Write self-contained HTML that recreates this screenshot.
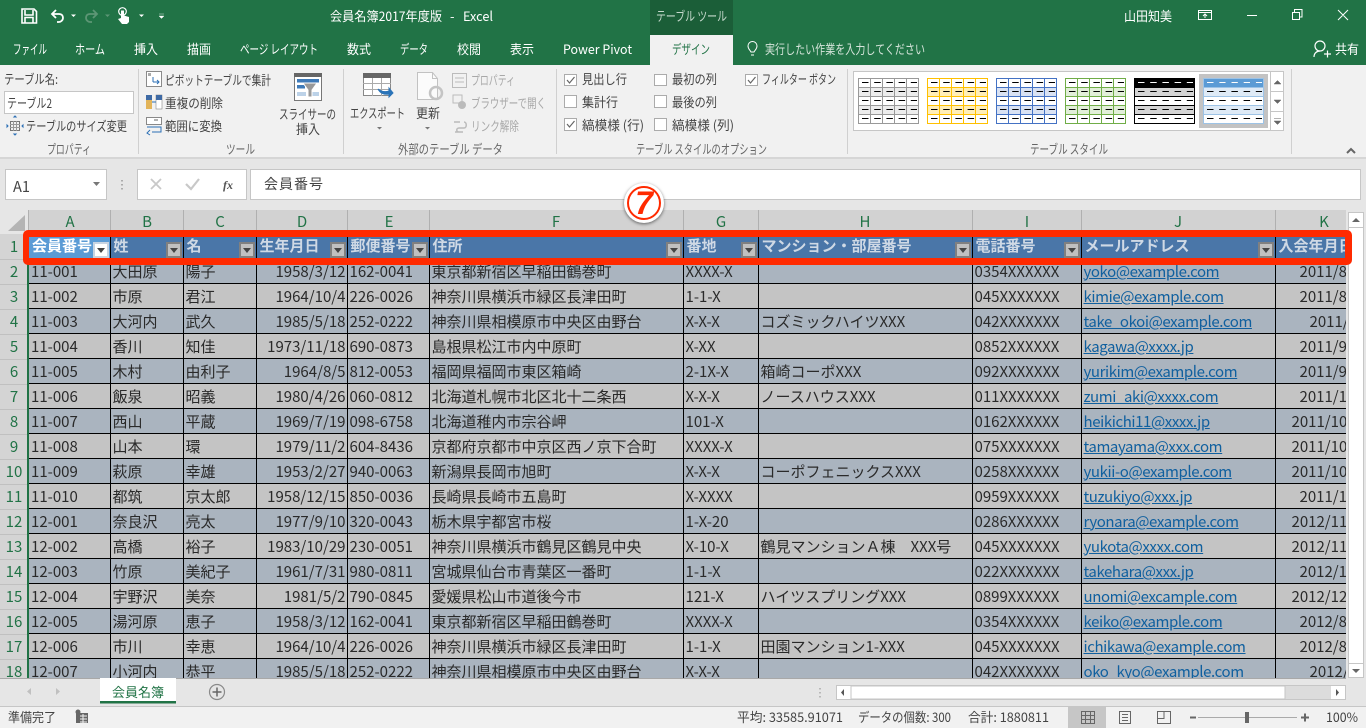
<!DOCTYPE html>
<html lang="ja"><head><meta charset="utf-8"><title>会員名簿2017年度版 - Excel</title>
<style>
html,body{margin:0;padding:0;width:1366px;height:728px;overflow:hidden;background:#e6e6e6;font-family:"Liberation Sans","Noto Sans CJK JP",sans-serif}
svg{position:absolute;left:0;top:0}
svg text{font-family:"Noto Sans CJK JP","Liberation Sans",sans-serif;font-size:13px;fill:#444}
#grid{position:absolute;left:29px;top:234px;width:1317px;height:444px;overflow:hidden;background:#c4c4c4}
table{border-collapse:collapse;table-layout:fixed;width:1416px;font-family:"Noto Sans CJK JP","Liberation Sans",sans-serif;font-size:15px;color:#2a2a2a}
td{height:23px;padding:1px 0 0 2px;border:1px solid #000;border-left:0;white-space:nowrap;overflow:hidden;line-height:23px;box-sizing:content-box}
tr{background:#c4c4c4}
tr:nth-child(even){background:#aab4bf}
tr.h{background:#4a76a8}
tr.h td{color:#cfd9e5;font-weight:700;position:relative;padding:0 0 0 3px;line-height:22px;vertical-align:middle;border-top:0;height:24px}
td.r{text-align:right;padding:1px 1px 0 0}
td a{color:#10609f;text-decoration:underline;letter-spacing:-.4px}
i{position:absolute;right:1px;top:8px;width:12px;height:12px;border:2px solid #808080;background:#c0c0c0}
i:after{content:"";position:absolute;left:2px;top:4px;border:4px solid transparent;border-top:5px solid #444;border-bottom:0}
i.w{background:#fff;border-color:#c8d4e2}
td.k{padding-left:24px}td.l{padding-left:16px}td.m{padding-left:34px}
#red{position:absolute;left:23px;top:230px;width:1329px;height:35px;box-sizing:border-box;border:7px solid #ff2a00;border-left-width:6px;border-radius:5px}
#b{position:absolute;left:624px;top:183px;width:40px;height:40px;border-radius:50%;background:#fff;box-shadow:0 1px 3px rgba(0,0,0,.55)}
#b div{position:absolute;left:3px;top:3px;width:34px;height:34px;box-sizing:border-box;border:2px solid #ff2a00;border-radius:50%;color:#ff2a00;font:italic 700 32px/30px "Liberation Sans",sans-serif;text-align:center}
</style></head><body>
<svg width="1366" height="728" viewBox="0 0 1366 728">
<defs>
<g id="d" fill="none" stroke-width="1" stroke-dasharray="6.500 5.700"><path d="M4 4.500H59M4 13.500H59M4 22.500H59M4 31.500H59M4 40.500H59"/></g>
<g id="gl" fill="none" stroke-width="1"><path d="M12.500 0V46M24.500 0V46M36.500 0V46M48.500 0V46M0 9.500H61M0 18.500H61M0 27.500H61M0 36.500H61"/></g>
</defs>
<rect width="1366" height="65" fill="#217346"/>
<rect x="650" width="83" height="35" fill="#1b5e38"/>
<rect x="650" y="35" width="83" height="31" fill="#f1f1f1"/>
<rect y="65" width="1366" height="93" fill="#f1f1f1"/>
<rect y="157" width="1366" height="2" fill="#d6d6d6"/>

<!-- QAT -->
<path d="M22 9h12l2.500 2.500V23H22zM25 10v5h8v-5M25 23v-5.500h8V23" fill="none" stroke="#fff" stroke-width="1.600"/>
<path d="M56 10l-4 4 4 4M52 14h7c3 0 4 2 4 4s-2 4-4 4h-2" fill="none" stroke="#fff" stroke-width="1.800"/>
<path d="M71 14.500h5l-2.500 2.500z" fill="#fff"/>
<path d="M93 10l4 4-4 4M97 14h-7c-3 0-4 2-4 4s2 4 4 4h2" fill="none" stroke="#5d9675" stroke-width="1.800"/>
<path d="M105 14.500h5l-2.500 2.500z" fill="#5d9675"/>
<circle cx="122.500" cy="11.500" r="3.800" fill="none" stroke="#fff" stroke-width="1.200"/>
<path d="M121 10.500h3v5l5 1.500v5l-2 2h-5l-4-5 3-1z" fill="#fff"/>
<path d="M139 14.500h5l-2.500 2.500z" fill="#fff"/>
<path d="M159 14h5M159 16h5l-2.500 2.500z" fill="#fff" stroke="#fff" stroke-width=".4"/>
<g>
<text x="330" y="21" textLength="112" lengthAdjust="spacingAndGlyphs" style="fill:#fff">会員名簿2017年度版</text>
<text x="450" y="21" style="fill:#fff">-</text>
<text x="463" y="21" textLength="30" lengthAdjust="spacingAndGlyphs" style="fill:#fff">Excel</text>
<text x="656" y="21" textLength="71" lengthAdjust="spacingAndGlyphs" style="fill:#c5d9cc">テーブル ツール</text>
<text x="1124" y="21" textLength="48" lengthAdjust="spacingAndGlyphs" style="fill:#fff">山田知美</text>
<text x="13" y="54" textLength="34" lengthAdjust="spacingAndGlyphs" style="fill:#fff">ファイル</text>
<text x="75" y="54" textLength="30" lengthAdjust="spacingAndGlyphs" style="fill:#fff">ホーム</text>
<text x="134" y="54" textLength="24" lengthAdjust="spacingAndGlyphs" style="fill:#fff">挿入</text>
<text x="187" y="54" textLength="24" lengthAdjust="spacingAndGlyphs" style="fill:#fff">描画</text>
<text x="240" y="54" textLength="78" lengthAdjust="spacingAndGlyphs" style="fill:#fff">ページ レイアウト</text>
<text x="347" y="54" textLength="24" lengthAdjust="spacingAndGlyphs" style="fill:#fff">数式</text>
<text x="400" y="54" textLength="28" lengthAdjust="spacingAndGlyphs" style="fill:#fff">データ</text>
<text x="457" y="54" textLength="24" lengthAdjust="spacingAndGlyphs" style="fill:#fff">校閲</text>
<text x="510" y="54" textLength="24" lengthAdjust="spacingAndGlyphs" style="fill:#fff">表示</text>
<text x="563" y="54" textLength="69" lengthAdjust="spacingAndGlyphs" style="fill:#fff">Power Pivot</text>
<text x="672" y="54" textLength="38" lengthAdjust="spacingAndGlyphs" style="fill:#217346">デザイン</text>
<text x="765" y="54" textLength="160" lengthAdjust="spacingAndGlyphs" style="fill:#d5e4da">実行したい作業を入力してください</text>
<text x="1335" y="54" textLength="24" lengthAdjust="spacingAndGlyphs" style="fill:#fff">共有</text>
</g>
<path d="M751 52c-1-2-3-3-3-6a4.500 4.500 0 0 1 9 0c0 3-2 4-3 6zM751 55h3" fill="none" stroke="#fff"/>
<circle cx="1320" cy="46" r="5" fill="none" stroke="#fff" stroke-width="1.200"/>
<path d="M1314 57c0-4 3-6 6-6M1324 54h7M1327.500 50.500v7" fill="none" stroke="#fff" stroke-width="1.200"/>
<!-- window -->
<path d="M1198.500 10.500h13v9h-13zM1198.500 12.500h13M1205 18v-4M1203 16l2-2 2 2" fill="none" stroke="#fff"/>
<path d="M1247 15.500h10M1292.500 12.500h7v7h-7zM1294.500 12v-2.500h7.500v7.500h-2.500M1338 10l10 10M1348 10l-10 10" fill="none" stroke="#fff"/>

<!-- separators -->
<path d="M138.500 69v85M343.500 69v85M556.500 69v85M847.500 69v85M1291.500 69v85" stroke="#d0d0d0"/>

<!-- props -->
<text x="4" y="84" textLength="54" lengthAdjust="spacingAndGlyphs">テーブル名:</text>
<rect x="4.500" y="91.500" width="129" height="22" fill="#fff" stroke="#c6c6c6"/>
<text x="7" y="108" textLength="45" lengthAdjust="spacingAndGlyphs">テーブル2</text>
<rect x="10.500" y="121.500" width="9" height="9" fill="none" stroke="#777"/><path d="M10 124.500h10M10 127.500h10M13.500 121v10M16.500 121v10" stroke="#999" fill="none"/>
<path d="M14 117l1-1 1 1zM14 134l1 1 1-1zM8 126l-1-1v2zM22 126l1-1v2z" stroke="#2b6fb5" fill="#2b6fb5"/>
<text x="26" y="131" textLength="101" lengthAdjust="spacingAndGlyphs">テーブルのサイズ変更</text>
<text x="47" y="154" textLength="44" lengthAdjust="spacingAndGlyphs" style="fill:#666">プロパティ</text>
<!-- tools -->
<rect x="146.500" y="71.500" width="15" height="15" fill="#fff" stroke="#8a8a8a"/><rect x="148" y="73" width="3" height="3" fill="#aaa"/>
<path d="M153 82h6M157 80l2 2-2 2M153 77v5" fill="none" stroke="#2b6fb5"/>
<text x="165" y="85" textLength="106" lengthAdjust="spacingAndGlyphs">ピボットテーブルで集計</text>
<rect x="146" y="95" width="6" height="14" fill="#e2b45a"/><rect x="146" y="95" width="6" height="5" fill="#3e6aa5"/>
<rect x="156" y="95" width="6" height="14" fill="#fff" stroke="#888" stroke-width=".6"/><rect x="156" y="95" width="6" height="5" fill="#3e6aa5"/>
<path d="M152 102h4" stroke="#2b6fb5"/>
<text x="165" y="108" textLength="58" lengthAdjust="spacingAndGlyphs">重複の削除</text>
<rect x="146.500" y="117.500" width="15" height="7" fill="#fff" stroke="#888"/>
<path d="M154 120h4" stroke="#666"/><path d="M147 127h14v5h-9M150 130l-3 3 3 2" fill="none" stroke="#2b6fb5"/>
<text x="165" y="131" textLength="57" lengthAdjust="spacingAndGlyphs">範囲に変換</text>
<rect x="294.500" y="73.500" width="27" height="27" fill="#fff" stroke="#777"/><rect x="294" y="73" width="28" height="4" fill="#666"/>
<rect x="297" y="79" width="22" height="3.500" fill="#3e7ab8"/><rect x="297" y="85" width="8" height="3.500" fill="#3e7ab8"/><rect x="297" y="92" width="9" height="4" fill="#bcd2e8"/><rect x="312" y="92" width="7" height="4" fill="#bcd2e8"/>
<path d="M303 83h14l-5 7v7h-4v-7z" fill="#999" stroke="#fff"/>
<text x="279" y="119" textLength="57" lengthAdjust="spacingAndGlyphs">スライサーの</text>
<text x="296" y="134" textLength="24" lengthAdjust="spacingAndGlyphs">挿入</text>
<text x="226" y="154" textLength="29" lengthAdjust="spacingAndGlyphs" style="fill:#666">ツール</text>
<!-- external -->
<rect x="363.500" y="73.500" width="27" height="22" fill="#fff" stroke="#888"/><rect x="363" y="73" width="28" height="5" fill="#666"/>
<path d="M363 83.500h28M363 89.500h28M372.500 78v18M381.500 78v18" stroke="#aaa" fill="none"/>
<path d="M378 89c4 3 8 3 11 2v-3l4 5-4 4v-3c-5 1-9-1-11-5z" fill="#2b74b8" stroke="#2b74b8"/>
<text x="350" y="118" textLength="55" lengthAdjust="spacingAndGlyphs">エクスポート</text>
<path d="M377 127h5l-2.500 2.500z" fill="#777"/>
<path d="M417.500 72.500h15l5 6v21h-20z" fill="#fbfbfb" stroke="#c2c2c2"/><path d="M432.500 72.500v6h5" fill="none" stroke="#c2c2c2"/>
<circle cx="436" cy="93" r="6" fill="none" stroke="#c4c4c4" stroke-width="2.500"/>
<text x="416" y="118" textLength="24" lengthAdjust="spacingAndGlyphs">更新</text>
<path d="M425 127h5l-2.500 2.500z" fill="#777"/>
<rect x="452.500" y="73.500" width="14" height="14" fill="none" stroke="#bbb"/><path d="M455 78h9M455 82h9" stroke="#bbb"/>
<text x="471" y="85" textLength="44" lengthAdjust="spacingAndGlyphs" style="fill:#a8a8a8">プロパティ</text>
<rect x="453" y="95" width="9" height="8" fill="none" stroke="#bbb"/><circle cx="462" cy="105" r="4" fill="#bbb"/>
<text x="471" y="108" textLength="75" lengthAdjust="spacingAndGlyphs" style="fill:#a8a8a8">ブラウザーで開く</text>
<path d="M454 122h6M464 122c3 0 3 6 0 6h-5c-3 0-3 4 0 4M455 132l8 0" fill="none" stroke="#bbb" stroke-width="1.500"/>
<text x="471" y="131" textLength="48" lengthAdjust="spacingAndGlyphs" style="fill:#a8a8a8">リンク解除</text>
<text x="398" y="154" textLength="105" lengthAdjust="spacingAndGlyphs" style="fill:#666">外部のテーブル データ</text>
<!-- options -->
<g fill="#fff" stroke="#ababab">
<rect x="564.500" y="74.500" width="12" height="11"/><rect x="564.500" y="95.500" width="12" height="12"/><rect x="564.500" y="118.500" width="12" height="12"/>
<rect x="654.500" y="74.500" width="12" height="11"/><rect x="654.500" y="95.500" width="12" height="12"/><rect x="654.500" y="118.500" width="12" height="12"/>
<rect x="745.500" y="74.500" width="12" height="11"/>
</g>
<path d="M567 80l2.500 3 5-6M567 124l2.500 3 5-6M748 80l2.500 3 5-6" fill="none" stroke="#666" stroke-width="1.200"/>
<text x="582" y="84" textLength="45" lengthAdjust="spacingAndGlyphs">見出し行</text>
<text x="582" y="107" textLength="36" lengthAdjust="spacingAndGlyphs">集計行</text>
<text x="582" y="130" textLength="62" lengthAdjust="spacingAndGlyphs">縞模様 (行)</text>
<text x="672" y="84" textLength="45" lengthAdjust="spacingAndGlyphs">最初の列</text>
<text x="672" y="107" textLength="45" lengthAdjust="spacingAndGlyphs">最後の列</text>
<text x="672" y="130" textLength="62" lengthAdjust="spacingAndGlyphs">縞模様 (列)</text>
<text x="762" y="84" textLength="74" lengthAdjust="spacingAndGlyphs">フィルター ボタン</text>
<text x="636" y="154" textLength="131" lengthAdjust="spacingAndGlyphs" style="fill:#666">テーブル スタイルのオプション</text>
<!-- gallery -->
<rect x="853.500" y="71.500" width="417" height="59" fill="#fff" stroke="#c6c6c6"/>
<g transform="translate(858,78)"><rect x="0" y="0" width="61" height="46" fill="#fff"/><rect y="9" width="61" height="9" fill="#ececec"/><rect y="27" width="61" height="9" fill="#ececec"/><use href="#gl" stroke="#999"/><rect x=".5" y=".5" width="60" height="45" fill="none" stroke="#999"/><use href="#d" stroke="#000"/></g>
<g transform="translate(927,78)"><rect y="9" width="61" height="9" fill="#ffeeb8"/><rect y="27" width="61" height="9" fill="#ffeeb8"/><use href="#gl" stroke="#ffc000"/><rect x=".5" y=".5" width="60" height="45" fill="none" stroke="#ffc000"/><use href="#d" stroke="#000"/></g>
<g transform="translate(996,78)"><rect y="9" width="61" height="9" fill="#d9e2f3"/><rect y="27" width="61" height="9" fill="#d9e2f3"/><use href="#gl" stroke="#4472c4"/><rect x=".5" y=".5" width="60" height="45" fill="none" stroke="#4472c4"/><use href="#d" stroke="#000"/></g>
<g transform="translate(1065,78)"><rect y="9" width="61" height="9" fill="#e2efd9"/><rect y="27" width="61" height="9" fill="#e2efd9"/><use href="#gl" stroke="#70ad47"/><rect x=".5" y=".5" width="60" height="45" fill="none" stroke="#70ad47"/><use href="#d" stroke="#000"/></g>
<g transform="translate(1134,78)"><rect width="61" height="9" fill="#000"/><rect y="9" width="61" height="9" fill="#d4d4d4"/><rect y="27" width="61" height="9" fill="#d4d4d4"/><path d="M0 9.500H61M0 18.500H61M0 27.500H61M0 36.500H61" stroke="#000"/><rect x=".5" y=".5" width="60" height="45" fill="none" stroke="#000"/><use href="#d" stroke="#000"/><path d="M4 4.500H59" stroke="#fff" stroke-width="1" stroke-dasharray="6.500 5.700"/></g>
<rect x="1199" y="74" width="69" height="54" fill="#c3c3c3"/>
<g transform="translate(1203,78)"><rect width="61" height="46" fill="#fff"/><rect width="61" height="9" fill="#5b9bd5"/><rect y="9" width="61" height="9" fill="#deeaf6"/><rect y="27" width="61" height="9" fill="#deeaf6"/><path d="M0 9.500H61M0 18.500H61M0 27.500H61M0 36.500H61" stroke="#9dc3e6"/><rect x=".5" y=".5" width="60" height="45" fill="none" stroke="#9dc3e6"/><use href="#d" stroke="#000"/><path d="M4 4.500H59" stroke="#fff" stroke-width="1" stroke-dasharray="6.500 5.700"/></g>
<g fill="#fff" stroke="#c6c6c6"><rect x="1270.500" y="71.500" width="13" height="20"/><rect x="1270.500" y="91.500" width="13" height="20"/><rect x="1270.500" y="111.500" width="13" height="19"/></g>
<path d="M1274 84h7l-3.500-3.500zM1274 100h7l-3.500 3.500zM1274 118.500h7M1274 121h7l-3.500 3.500z" fill="#666" stroke="#666" stroke-width=".5"/>
<text x="1030" y="154" textLength="78" lengthAdjust="spacingAndGlyphs" style="fill:#666">テーブル スタイル</text>
<path d="M1347 153l4-4 4 4" fill="none" stroke="#666" stroke-width="2"/>

<!-- formula bar -->
<rect x="5.500" y="169.500" width="101" height="30" fill="#fff" stroke="#c6c6c6"/>
<text x="13" y="192" textLength="17" lengthAdjust="spacingAndGlyphs" style="font-size:15px">A1</text>
<path d="M93 182h7l-3.500 4z" fill="#777"/>
<path d="M122 180v1.500M122 184v1.500M122 188v1.500" stroke="#999" stroke-width="1.500"/>
<rect x="137.500" y="169.500" width="109" height="30" fill="#fff" stroke="#c6c6c6"/>
<path d="M151 179l10 10M161 179l-10 10" stroke="#c8c8c8" stroke-width="1.800" fill="none"/>
<path d="M186 184l5 5 8-10" stroke="#c8c8c8" stroke-width="2.200" fill="none"/>
<text x="223" y="189" style="font:italic 700 12px 'Liberation Serif',serif;fill:#555">fx</text>
<rect x="250.500" y="169.500" width="1110" height="30" fill="#fff" stroke="#c6c6c6"/>
<text x="264" y="189" textLength="59" lengthAdjust="spacing" style="font-size:14px">会員番号</text>

<!-- col headers -->
<rect x="29" y="210" width="1317" height="24" fill="#d2d2d2"/>
<rect x="0" y="234" width="29" height="444" fill="#d4d4d4"/>
<path d="M8 231L25 215V231z" fill="#b4b4b4"/>
<path d="M28.500 210V678M110.500 210v24M183.500 210v24M256.500 210v24M347.500 210v24M429.500 210v24M683.500 210v24M758.500 210v24M972.500 210v24M1081.500 210v24M1275.500 210v24" stroke="#b0b0b0"/>
<g text-anchor="middle">
<text x="70" y="227" style="font-size:15px;fill:#217346">A</text><text x="147" y="227" style="font-size:15px;fill:#217346">B</text><text x="220" y="227" style="font-size:15px;fill:#217346">C</text><text x="302" y="227" style="font-size:15px;fill:#217346">D</text><text x="389" y="227" style="font-size:15px;fill:#217346">E</text><text x="556" y="227" style="font-size:15px;fill:#217346">F</text><text x="721" y="227" style="font-size:15px;fill:#217346">G</text><text x="865" y="227" style="font-size:15px;fill:#217346">H</text><text x="1027" y="227" style="font-size:15px;fill:#217346">I</text><text x="1178" y="227" style="font-size:15px;fill:#217346">J</text><text x="1324" y="227" style="font-size:15px;fill:#217346">K</text>
<text x="14" y="252" style="font-size:15px;fill:#217346">1</text><text x="14" y="277" style="font-size:15px;fill:#217346">2</text><text x="14" y="302" style="font-size:15px;fill:#217346">3</text><text x="14" y="327" style="font-size:15px;fill:#217346">4</text><text x="14" y="352" style="font-size:15px;fill:#217346">5</text><text x="14" y="377" style="font-size:15px;fill:#217346">6</text><text x="14" y="402" style="font-size:15px;fill:#217346">7</text><text x="14" y="427" style="font-size:15px;fill:#217346">8</text><text x="14" y="452" style="font-size:15px;fill:#217346">9</text><text x="14" y="477" style="font-size:15px;fill:#217346">10</text><text x="14" y="502" style="font-size:15px;fill:#217346">11</text><text x="14" y="527" style="font-size:15px;fill:#217346">12</text><text x="14" y="552" style="font-size:15px;fill:#217346">13</text><text x="14" y="577" style="font-size:15px;fill:#217346">14</text><text x="14" y="602" style="font-size:15px;fill:#217346">15</text><text x="14" y="627" style="font-size:15px;fill:#217346">16</text><text x="14" y="652" style="font-size:15px;fill:#217346">17</text><text x="14" y="677" style="font-size:15px;fill:#217346">18</text>
</g>
<path d="M0 259.500H28M0 284.500H28M0 309.500H28M0 334.500H28M0 359.500H28M0 384.500H28M0 409.500H28M0 434.500H28M0 459.500H28M0 484.500H28M0 509.500H28M0 534.500H28M0 559.500H28M0 584.500H28M0 609.500H28M0 634.500H28M0 659.500H28" stroke="#c0c0c0"/>
<rect x="27" y="259" width="2" height="419" fill="#217346"/>
<!-- v scroll -->
<rect x="1346" y="210" width="20" height="468" fill="#e6e6e6"/>
<rect x="1348.500" y="212.500" width="15" height="465" fill="#fff" stroke="#c6c6c6"/>
<path d="M1348 227.500h16M1348 663.500h16" stroke="#c6c6c6"/>
<path d="M1352 222h8l-4-4zM1352 669h8l-4 4z" fill="#666"/>
<!-- tab bar -->
<rect x="0" y="678" width="1366" height="28" fill="#e6e6e6"/>
<path d="M0 678.500H1346" stroke="#a8a8a8"/>
<path d="M31 688l-4 3.500 4 3.500zM56 688l4 3.500-4 3.500z" fill="#c0c0c0"/>
<rect x="100" y="678" width="76" height="25" fill="#fff"/><rect x="100" y="701" width="76" height="2.500" fill="#217346"/>
<text x="112" y="697" textLength="52" lengthAdjust="spacingAndGlyphs" style="font-size:13px;fill:#217346">会員名簿</text>
<circle cx="217" cy="692" r="7.500" fill="none" stroke="#8a8a8a" stroke-width="1.200"/><path d="M212.500 692h9M217 687.500v9" stroke="#666" stroke-width="1.500"/>
<path d="M820 688v1.500M820 692v1.500M820 696v1.500" stroke="#a8a8a8" stroke-width="1.500"/>
<rect x="836.500" y="685.500" width="509" height="14" fill="#dcdcdc" stroke="#c6c6c6"/>
<rect x="837" y="686" width="14" height="13" fill="#fff"/><rect x="851" y="686" width="434" height="13" fill="#fff" stroke="#c6c6c6"/><rect x="1331" y="686" width="14" height="13" fill="#fff"/>
<path d="M844 689l-3 3.500 3 3.500zM1336 689l3 3.500-3 3.500z" fill="#555"/>
<!-- status -->
<rect x="0" y="706" width="1366" height="22" fill="#f1f1f1"/><path d="M0 706.500H1366" stroke="#c6c6c6"/>
<text x="8" y="722" textLength="48" lengthAdjust="spacingAndGlyphs">準備完了</text>
<rect x="76" y="713" width="12" height="10" fill="#666"/><circle cx="78" cy="712" r="2.500" fill="#666"/><path d="M80 716h7M80 719h7M80 722h7M83 714v9" stroke="#f1f1f1" fill="none"/>
<text x="737" y="722" textLength="106" lengthAdjust="spacingAndGlyphs">平均: 33585.91071</text>
<text x="858" y="722" textLength="93" lengthAdjust="spacingAndGlyphs">データの個数: 300</text>
<text x="968" y="722" textLength="81" lengthAdjust="spacingAndGlyphs">合計: 1880811</text>
<rect x="1068" y="707" width="38" height="21" fill="#c6c6c6"/>
<path d="M1081.500 711.500h13v12h-13zM1081.500 715.500h13M1081.500 719.500h13M1085.500 711.500v12M1090.500 711.500v12" fill="none" stroke="#666"/>
<path d="M1119.500 711.500h11v12h-11zM1122 714.500h6M1122 717.500h6M1122 720.500h6" fill="none" stroke="#666"/>
<path d="M1157.500 723.500v-12h13v12zM1164 711.500v7h-7" fill="none" stroke="#666"/>
<path d="M1190 717.500h6" stroke="#666" stroke-width="2"/><path d="M1198 717.500h99" stroke="#aaa"/>
<rect x="1245" y="712" width="4" height="11" fill="#666"/><path d="M1301 717.500h8M1305 713.500v8" stroke="#666" stroke-width="2"/>
<text x="1326" y="722" textLength="32" lengthAdjust="spacingAndGlyphs">100%</text>
</svg>

<div id="grid"><table>
<colgroup><col style="width:81px"><col style="width:73px"><col style="width:73px"><col style="width:91px"><col style="width:82px"><col style="width:254px"><col style="width:75px"><col style="width:214px"><col style="width:109px"><col style="width:194px"><col style="width:170px"></colgroup>
<tr class="h"><td style="background:#5b9bd5;color:#fff">会員番号<i class="w"></i></td><td>姓<i></i></td><td>名<i></i></td><td>生年月日<i></i></td><td>郵便番号<i></i></td><td>住所<i></i></td><td>番地<i></i></td><td>マンション・部屋番号<i></i></td><td>電話番号<i></i></td><td>メールアドレス<i></i></td><td>入会年月日</td></tr>
<tr><td>11-001</td><td>大田原</td><td>陽子</td><td class="r">1958/3/12</td><td>162-0041</td><td>東京都新宿区早稲田鶴巻町</td><td>XXXX-X</td><td></td><td>0354XXXXXX</td><td><a>yoko@example.com</a></td><td class="k">2011/8</td></tr>
<tr><td>11-002</td><td>市原</td><td>君江</td><td class="r">1964/10/4</td><td>226-0026</td><td>神奈川県横浜市緑区長津田町</td><td>1-1-X</td><td></td><td>045XXXXXXX</td><td><a>kimie@example.com</a></td><td class="k">2011/8</td></tr>
<tr><td>11-003</td><td>大河内</td><td>武久</td><td class="r">1985/5/18</td><td>252-0222</td><td>神奈川県相模原市中央区由野台</td><td>X-X-X</td><td>コズミックハイツXXX</td><td>042XXXXXXX</td><td><a>take_okoi@example.com</a></td><td class="m">2011/</td></tr>
<tr><td>11-004</td><td>香川</td><td>知佳</td><td class="r">1973/11/18</td><td>690-0873</td><td>島根県松江市内中原町</td><td>X-XX</td><td></td><td>0852XXXXXX</td><td><a>kagawa@xxxx.jp</a></td><td class="k">2011/9</td></tr>
<tr><td>11-005</td><td>木村</td><td>由利子</td><td class="r">1964/8/5</td><td>812-0053</td><td>福岡県福岡市東区箱崎</td><td>2-1X-X</td><td>箱崎コーポXXX</td><td>092XXXXXXX</td><td><a>yurikim@example.com</a></td><td class="k">2011/9</td></tr>
<tr><td>11-006</td><td>飯泉</td><td>昭義</td><td class="r">1980/4/26</td><td>060-0812</td><td>北海道札幌市北区北十二条西</td><td>X-X-X</td><td>ノースハウスXXX</td><td>011XXXXXXX</td><td><a>zumi_aki@xxxx.com</a></td><td class="k">2011/1</td></tr>
<tr><td>11-007</td><td>西山</td><td>平蔵</td><td class="r">1969/7/19</td><td>098-6758</td><td>北海道稚内市宗谷岬</td><td>101-X</td><td></td><td>0162XXXXXX</td><td><a>heikichi11@xxxx.jp</a></td><td class="l">2011/10</td></tr>
<tr><td>11-008</td><td>山本</td><td>環</td><td class="r">1979/11/2</td><td>604-8436</td><td>京都府京都市中京区西ノ京下合町</td><td>XXXX-X</td><td></td><td>075XXXXXXX</td><td><a>tamayama@xxx.com</a></td><td class="l">2011/10</td></tr>
<tr><td>11-009</td><td>萩原</td><td>幸雄</td><td class="r">1953/2/27</td><td>940-0063</td><td>新潟県長岡市旭町</td><td>X-X-X</td><td>コーポフェニックスXXX</td><td>0258XXXXXX</td><td><a>yukii-o@example.com</a></td><td class="l">2011/10</td></tr>
<tr><td>11-010</td><td>都筑</td><td>京太郎</td><td class="r">1958/12/15</td><td>850-0036</td><td>長崎県長崎市五島町</td><td>X-XXXX</td><td></td><td>0959XXXXXX</td><td><a>tuzukiyo@xxx.jp</a></td><td class="k">2011/1</td></tr>
<tr><td>12-001</td><td>奈良沢</td><td>亮太</td><td class="r">1977/9/10</td><td>320-0043</td><td>栃木県宇都宮市桜</td><td>1-X-20</td><td></td><td>0286XXXXXX</td><td><a>ryonara@example.com</a></td><td class="l">2012/11</td></tr>
<tr><td>12-002</td><td>高橋</td><td>裕子</td><td class="r">1983/10/29</td><td>230-0051</td><td>神奈川県横浜市鶴見区鶴見中央</td><td>X-10-X</td><td>鶴見マンションＡ棟　XXX号</td><td>045XXXXXXX</td><td><a>yukota@xxxx.com</a></td><td class="l">2012/11</td></tr>
<tr><td>12-003</td><td>竹原</td><td>美紀子</td><td class="r">1961/7/31</td><td>980-0811</td><td>宮城県仙台市青葉区一番町</td><td>1-1-X</td><td></td><td>022XXXXXXX</td><td><a>takehara@xxx.jp</a></td><td class="k">2012/1</td></tr>
<tr><td>12-004</td><td>宇野沢</td><td>美奈</td><td class="r">1981/5/2</td><td>790-0845</td><td>愛媛県松山市道後今市</td><td>121-X</td><td>ハイツスプリングXXX</td><td>0899XXXXXX</td><td><a>unomi@excample.com</a></td><td class="l">2012/12</td></tr>
<tr><td>12-005</td><td>湯河原</td><td>恵子</td><td class="r">1958/3/12</td><td>162-0041</td><td>東京都新宿区早稲田鶴巻町</td><td>XXXX-X</td><td></td><td>0354XXXXXX</td><td><a>keiko@example.com</a></td><td class="k">2012/8</td></tr>
<tr><td>12-006</td><td>市川</td><td>幸恵</td><td class="r">1964/10/4</td><td>226-0026</td><td>神奈川県横浜市緑区長津田町</td><td>1-1-X</td><td>田園マンション1-XXX</td><td>045XXXXXXX</td><td><a>ichikawa@example.com</a></td><td class="k">2012/8</td></tr>
<tr><td>12-007</td><td>小河内</td><td>恭平</td><td class="r">1985/5/18</td><td>252-0222</td><td>神奈川県相模原市中央区由野台</td><td>X-X-X</td><td></td><td>042XXXXXXX</td><td><a>oko_kyo@example.com</a></td><td class="m">2012/</td></tr>
</table></div>
<div id="red"></div>
<div id="b"><div>7</div></div>
</body></html>
